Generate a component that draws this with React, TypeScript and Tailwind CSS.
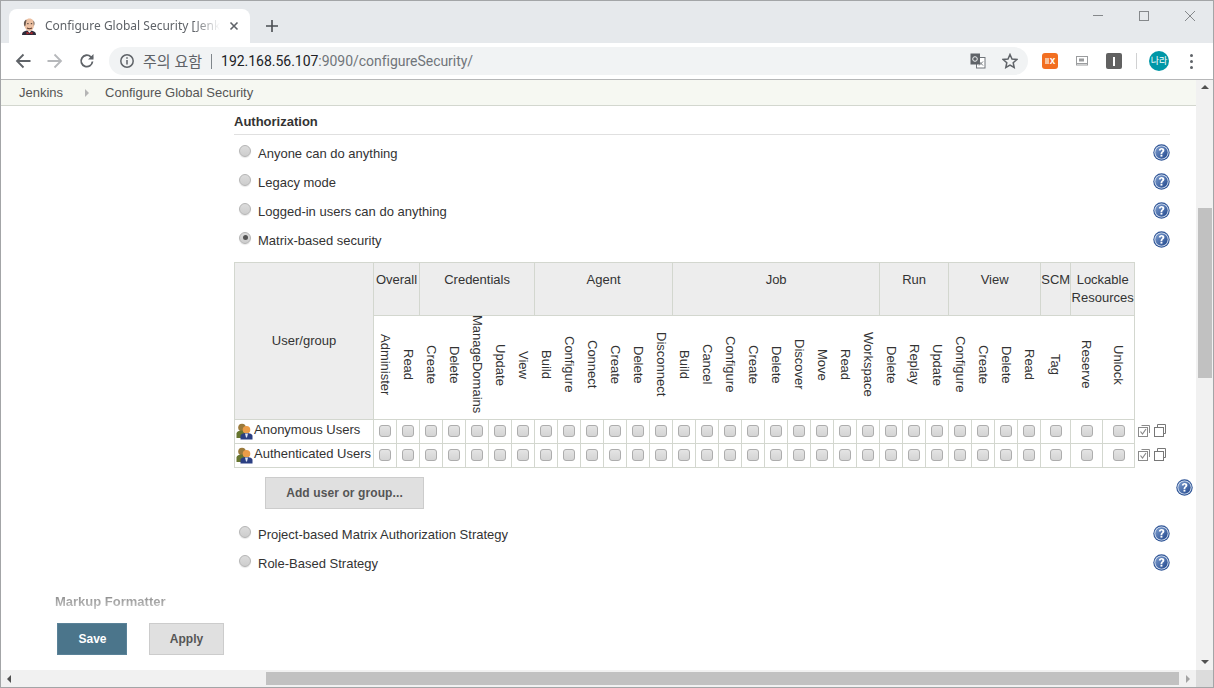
import React from "react";

const groups: [string, number][] = [
  ["Overall", 2],
  ["Credentials", 5],
  ["Agent", 6],
  ["Job", 9],
  ["Run", 3],
  ["View", 4],
  ["SCM", 1],
  ["Lockable Resources", 2],
];

const perms: string[] = [
  "Administer", "Read",
  "Create", "Delete", "ManageDomains", "Update", "View",
  "Build", "Configure", "Connect", "Create", "Delete", "Disconnect",
  "Build", "Cancel", "Configure", "Create", "Delete", "Discover", "Move", "Read", "Workspace",
  "Delete", "Replay", "Update",
  "Configure", "Create", "Delete", "Read",
  "Tag",
  "Reserve", "Unlock",
];

const widths = perms.map((_, i) => (i === 29 ? 30 : i >= 30 ? 32 : 23));

function Help() {
  return (
    <svg width="17" height="17" viewBox="0 0 17 17" className="shrink-0">
      <defs>
        <linearGradient id="helpg" x1="0" y1="0" x2="1" y2="1">
          <stop offset="0" stopColor="#7f9fd0" />
          <stop offset="1" stopColor="#20468c" />
        </linearGradient>
      </defs>
      <circle cx="8.5" cy="8.5" r="8.2" fill="#2f5597" />
      <circle cx="8.5" cy="8.5" r="7.1" fill="#dfe8f4" />
      <circle cx="8.5" cy="8.5" r="6.2" fill="url(#helpg)" />
      <path d="M5.800 6.600c0-1.700 1.200-2.600 2.800-2.600s2.800.9 2.800 2.300c0 2-2.100 1.900-2.100 3.600H7.500c0-2.300 1.900-2.300 1.900-3.500 0-.5-.3-.8-.8-.8-.6 0-.9.400-.9 1z" fill="#fff" />
      <rect x="7.500" y="10.700" width="1.900" height="1.900" fill="#fff" />
    </svg>
  );
}

function Radio({ checked = false }: { checked?: boolean }) {
  return (
    <span className="relative w-[12px] h-[12px] rounded-full border border-[#b4b4b4] bg-gradient-to-b from-[#dcdcdc] to-[#cdcdcd] shadow-[0_1px_1px_#e8e8e8] flex items-center justify-center shrink-0">
      {checked && <span className="w-[5px] h-[5px] rounded-full bg-[#555]" />}
    </span>
  );
}

function Option({ label, checked }: { label: string; checked?: boolean }) {
  return (
    <div className="h-[29px] w-[936px] flex items-center">
      <span className="ml-[5px] -mt-[6px]"><Radio checked={checked} /></span>
      <span className="ml-[7px] text-[13px] text-[#333]">{label}</span>
      <span className="ml-auto -mt-[2px]"><Help /></span>
    </div>
  );
}

function Box() {
  return (
    <span className="block mx-auto -mt-px w-[12px] h-[12px] rounded-[3px] border border-[#adadad] bg-gradient-to-b from-[#e4e4e4] to-[#d4d4d4]" />
  );
}

function Users() {
  return (
    <svg width="17" height="17" viewBox="0 0 17 17" className="shrink-0">
      <circle cx="6" cy="4.500" r="3.800" fill="#9a7a3c" />
      <path d="M0.500 15V10.500C0.500 8.500 3 7.500 6 7.500s5 1 5 3V15z" fill="#66752f" />
      <circle cx="10.500" cy="6.800" r="3.800" fill="#eb9c48" />
      <path d="M4.500 16.500v-3.500c0-1.800 2.800-3 6-3s6 1.200 6 3v3.500z" fill="#2b3f83" />
      <path d="M9 10.500h3l-1 4h-1z" fill="#dfe6f2" />
    </svg>
  );
}

function CheckAll() {
  return (
    <svg width="12" height="13" viewBox="0 0 12 13" className="shrink-0">
      <path d="M3.500 1.500H11.500V9" fill="none" stroke="#8a8a8a" />
      <rect x="0.500" y="3.500" width="9" height="9" fill="#fff" stroke="#8a8a8a" />
      <path d="M2.500 7.500 4.500 10 8 5" fill="none" stroke="#8a8a8a" strokeWidth="1.200" />
    </svg>
  );
}

function CopyAll() {
  return (
    <svg width="12" height="13" viewBox="0 0 12 13" className="shrink-0">
      <path d="M3.500 3V.5H11.500V9.500H10" fill="none" stroke="#777" />
      <rect x="0.500" y="3.500" width="9" height="9" fill="#fff" stroke="#777" />
    </svg>
  );
}

function Favicon() {
  return (
    <svg width="16" height="17" viewBox="0 0 16 17" className="shrink-0">
      <path d="M1 17c0-3 2-4.500 7-4.500s7 1.500 7 4.500z" fill="#2c2c3a" />
      <path d="M6.500 12.500h4l-2 2.500z" fill="#f2f2f2" />
      <path d="M3.500 7.500C3 3 5.500 .5 8.500.5s5 2.500 4.500 7c-.3 3-2 5.500-4.500 5.500S3.800 10.500 3.500 7.500z" fill="#ecc0a2" />
      <path d="M3.600 8.500C2.300 6 2.700 3.200 4.500 2c.6-.4 1.100-.3 1 .5-.6 1.600-.5 3-1 5zM12.900 8c1-2 .8-4-.4-5.500-.2 1.800.2 3.500.4 5.500z" fill="#6a5a50" />
      <path d="M6.200 5.700h1.400M9.800 5.700h1.400" stroke="#3c2f2a" />
      <path d="M6 10q2.500 1.400 5 0" fill="none" stroke="#5f4032" strokeWidth="1.100" />
      <path d="M5.500 13.800l3 1.200 3-1.200v2.700l-3-1.200-3 1.200z" fill="#b3262c" />
    </svg>
  );
}

export default function App() {
  const font = { fontFamily: '"Liberation Sans", Arial, sans-serif' };
  return (
    <div style={font} className="w-[1214px] h-[688px] flex flex-col border border-[#a3a5a7] overflow-hidden bg-white text-[#333]">
      {/* Tab strip */}
      <div className="h-[42px] bg-[#e6e9ec] flex items-end shrink-0 pl-[8px]">
        <div className="w-[241px] h-[34px] bg-white rounded-t-[8px] flex items-center pl-[12px] pr-[10px]">
          <Favicon />
          <span style={{ fontFamily: '"Noto Sans", sans-serif' }} className="ml-[8px] w-[175px] text-[12px] text-[#5f6368] whitespace-nowrap overflow-hidden [mask-image:linear-gradient(to_right,black_85%,transparent)]">
            Configure Global Security [Jenkins]
          </span>
          <svg width="10" height="10" viewBox="0 0 10 10" className="ml-[9px]"><path d="M1.500 1.500 8.500 8.500M8.500 1.500 1.500 8.500" stroke="#5f6368" strokeWidth="1.600" /></svg>
        </div>
        <svg width="14" height="14" viewBox="0 0 14 14" className="ml-[15px] mb-[10px]"><path d="M7 1V13M1 7H13" stroke="#4a4d51" strokeWidth="1.600" /></svg>
        <div className="ml-auto flex items-start self-start pt-[9px] pr-[17px]">
          <svg width="12" height="12" viewBox="0 0 12 12"><path d="M1 5.500H11" stroke="#85888b" /></svg>
          <svg width="12" height="12" viewBox="0 0 12 12" className="ml-[34px]"><rect x="1.500" y="1.500" width="9" height="9" fill="none" stroke="#85888b" /></svg>
          <svg width="12" height="12" viewBox="0 0 12 12" className="ml-[34px]"><path d="M1 1 11 11M11 1 1 11" stroke="#85888b" /></svg>
        </div>
      </div>
      {/* Toolbar */}
      <div className="h-[37px] bg-white border-b border-[#b6b7b8] flex items-center shrink-0 pl-[14px]">
        <svg width="16" height="16" viewBox="0 0 16 16"><path d="M15.500 8H2M8.500 1.500 2 8l6.500 6.500" fill="none" stroke="#5f6368" strokeWidth="1.800" /></svg>
        <svg width="16" height="16" viewBox="0 0 16 16" className="ml-[16px]"><path d="M.5 8H14M7.500 1.500 14 8l-6.500 6.500" fill="none" stroke="#b6b8bb" strokeWidth="1.800" /></svg>
        <svg width="16" height="16" viewBox="0 0 16 16" className="ml-[16px]"><path d="M13.500 8.500A5.700 5.700 0 1 1 11.800 3.800L13.800 5.500" fill="none" stroke="#5f6368" strokeWidth="1.800" /><path d="M14.500 1v5.500H9z" fill="#5f6368" /></svg>
        <div style={{ fontFamily: '"Noto Sans", "Noto Sans CJK KR", sans-serif' }} className="ml-[14px] w-[919px] h-[28px] rounded-[14px] bg-[#f1f3f4] flex items-center pl-[10px]">
          <svg width="16" height="16" viewBox="0 0 16 16"><circle cx="8" cy="8" r="6.200" fill="none" stroke="#5f6368" strokeWidth="1.500" /><path d="M8 7v4.500M8 4.300v1.500" stroke="#5f6368" strokeWidth="1.500" /></svg>
          <span className="ml-[8px] text-[15px] text-[#5f6368] whitespace-nowrap">주의 요함</span>
          <span className="ml-[9px] w-px h-[15px] bg-[#80868b]" />
          <span style={{ fontFamily: 'Roboto, sans-serif' }} className="ml-[9px] text-[14px] tracking-[-0.03px] text-[#202124] whitespace-nowrap">
            192.168.56.107<span className="text-[#70757a]">:9090/configureSecurity/</span>
          </span>
          <svg width="16" height="16" viewBox="0 0 16 16" className="ml-auto">
            <rect x="6.500" y="4.500" width="8.500" height="10.500" fill="#fff" stroke="#70757a" />
            <rect x="0.500" y="0.500" width="9.500" height="11" fill="#5f6368" />
            <circle cx="5" cy="6" r="2.300" fill="none" stroke="#f1f3f4" />
            <path d="M9 8.500l4 4M13 8.500l-4 4" stroke="#70757a" />
          </svg>
          <svg width="16" height="16" viewBox="0 0 16 16" className="ml-[16px] mr-[10px]"><path d="M8 1.500l2 4.500 4.800.5-3.600 3.200 1 4.800L8 12.100 3.800 14.500l1-4.800L1.200 6.500 6 6z" fill="none" stroke="#5f6368" strokeWidth="1.500" /></svg>
        </div>
        <div className="ml-[14px] w-[16px] h-[16px] rounded-[3px] bg-[#f26f21] flex items-center justify-center text-white text-[10px] font-bold leading-none">
          <span className="w-[4px] h-[6px] bg-[#f8c29c] mr-px" />x
        </div>
        <svg width="14" height="14" viewBox="0 0 14 14" className="ml-[17px]"><rect x="1.500" y="2.500" width="11" height="8.500" fill="none" stroke="#9a9c9e" /><rect x="4" y="4.500" width="5" height="3" fill="#9a9c9e" /><path d="M2 9.500H12" stroke="#9a9c9e" /></svg>
        <div className="ml-[17px] w-[16px] h-[16px] rounded-[2px] bg-[#616161] flex items-center justify-center"><span className="w-[2px] h-[9px] bg-white" /></div>
        <span className="ml-[14px] w-px h-[16px] bg-[#d0d1d2]" />
        <div style={{ fontFamily: '"Noto Sans CJK KR", sans-serif' }} className="ml-[12px] w-[20px] h-[20px] rounded-full bg-[#0097a7] text-white text-[9px] flex items-center justify-center whitespace-nowrap">나라</div>
        <div className="ml-[21px] flex flex-col gap-[3px]">
          <span className="w-[3px] h-[3px] rounded-full bg-[#5f6368]" />
          <span className="w-[3px] h-[3px] rounded-full bg-[#5f6368]" />
          <span className="w-[3px] h-[3px] rounded-full bg-[#5f6368]" />
        </div>
      </div>
      {/* Viewport */}
      <div className="flex-1 min-h-0 flex flex-col">
        <div className="flex-1 min-h-0 flex">
          <div className="flex-1 min-w-0 flex flex-col">
            {/* Breadcrumb */}
            <div className="h-[26px] shrink-0 bg-[#f6f8f2] border-b border-[#d3d7cf] flex items-center pl-[18px] text-[13px] text-[#555]">
              <span>Jenkins</span>
              <span className="ml-[22px] w-0 h-0 border-y-[4px] border-y-transparent border-l-[4px] border-l-[#b5b5b5]" />
              <span className="ml-[16px]">Configure Global Security</span>
            </div>
            {/* Page */}
            <div className="flex-1 min-h-0 text-[13px]">
              <div className="pl-[233px]">
                <div className="w-[936px] h-[29px] border-b border-[#e0e0e0] font-bold text-[13px] text-[#333] flex items-center pt-[4px]">Authorization</div>
                <div className="mt-[4px]">
                  <Option label="Anyone can do anything" />
                  <Option label="Legacy mode" />
                  <Option label="Logged-in users can do anything" />
                  <Option label="Matrix-based security" checked />
                </div>
                <table className="mt-[7px] border-collapse table-fixed w-[936px] text-[13px] text-[#333]">
                  <colgroup>
                    <col className="w-[139px]" />
                    {widths.map((w, i) => (
                      <col key={i} style={{ width: w }} />
                    ))}
                    <col className="w-[35px]" />
                  </colgroup>
                  <tbody>
                    <tr className="h-[53px]">
                      <th rowSpan={2} className="border border-[#d3d7cf] bg-[#ededed] font-normal text-center align-middle">User/group</th>
                      {groups.map(([g, span]) => (
                        <th key={g} colSpan={span} className="border border-[#d3d7cf] bg-[#ededed] font-normal text-center align-top pt-[8px] leading-[18px] px-0">{g}</th>
                      ))}
                    </tr>
                    <tr className="h-[104px]">
                      {perms.map((p, i) => (
                        <td key={i} className="border-y border-[#d3d7cf] p-0 last:border-r">
                          <div className="h-[103px] flex items-center justify-center pb-[6px]">
                            <span className="[writing-mode:vertical-rl] whitespace-nowrap">{p}</span>
                          </div>
                        </td>
                      ))}
                    </tr>
                    {["Anonymous Users", "Authenticated Users"].map((u) => (
                      <tr key={u} className="h-[24px]">
                        <td className="border border-[#d3d7cf] p-0">
                          <div className="flex items-center pl-px -mt-px whitespace-nowrap">
                            <Users />
                            <span className="ml-[1px] -mt-[3px]">{u}</span>
                          </div>
                        </td>
                        {perms.map((_, i) => (
                          <td key={i} className="border border-[#d3d7cf] p-0"><Box /></td>
                        ))}
                        <td className="p-0">
                          <div className="flex items-center gap-[4px] pl-[3px] -mt-[3px]">
                            <CheckAll />
                            <CopyAll />
                          </div>
                        </td>
                      </tr>
                    ))}
                  </tbody>
                </table>
                <div className="mt-[9px] w-[959px] flex items-start justify-between">
                  <button className="ml-[31px] w-[159px] h-[32px] bg-[#e0e0e0] border border-[#cccccc] text-[12px] tracking-[0.1px] font-bold text-[#555]">Add user or group...</button>
                  <span className="mt-[2px]"><Help /></span>
                </div>
                <div className="mt-[11px]">
                  <Option label="Project-based Matrix Authorization Strategy" />
                  <Option label="Role-Based Strategy" />
                </div>
              </div>
              <div className="pl-[54px]">
                <div className="mt-[13px] h-[20px] pt-[2px] flex items-center font-bold text-[13px] text-transparent bg-gradient-to-b from-[#777777] to-[#d0d0d0] bg-clip-text w-fit">Markup Formatter</div>
                <div className="mt-[12px] ml-[2px] flex gap-[22px]">
                  <button className="w-[70px] h-[32px] bg-[#4b758b] border border-[#5a8298] text-white text-[12px] font-bold pl-[1px]">Save</button>
                  <button className="w-[75px] h-[32px] bg-[#e0e0e0] border border-[#cccccc] text-[#555] text-[12px] font-bold">Apply</button>
                </div>
              </div>
            </div>
          </div>
          {/* Vertical scrollbar */}
          <div className="w-[17px] shrink-0 bg-[#f1f1f1] flex flex-col items-center pt-[5px] pl-[1px]">
            <span className="w-0 h-0 border-x-[4px] border-x-transparent border-b-[4px] border-b-[#505050]" />
            <span className="mt-[119px] w-[14px] h-[170px] bg-[#c1c1c1]" />
            <span className="mt-auto mb-[6px] w-0 h-0 border-x-[4px] border-x-transparent border-t-[4px] border-t-[#505050]" />
          </div>
        </div>
        {/* Horizontal scrollbar */}
        <div className="h-[17px] shrink-0 bg-[#f1f1f1] flex items-center pl-[6px]">
          <span className="w-0 h-0 border-y-[4px] border-y-transparent border-r-[4px] border-r-[#505050]" />
          <span className="ml-[255px] w-[913px] h-[13px] bg-[#c1c1c1]" />
          <span className="ml-[7px] w-0 h-0 border-y-[4px] border-y-transparent border-l-[4px] border-l-[#a3a3a3]" />
          <span className="ml-auto w-[17px] h-[17px] bg-[#dcdcdc]" />
        </div>
      </div>
    </div>
  );
}
